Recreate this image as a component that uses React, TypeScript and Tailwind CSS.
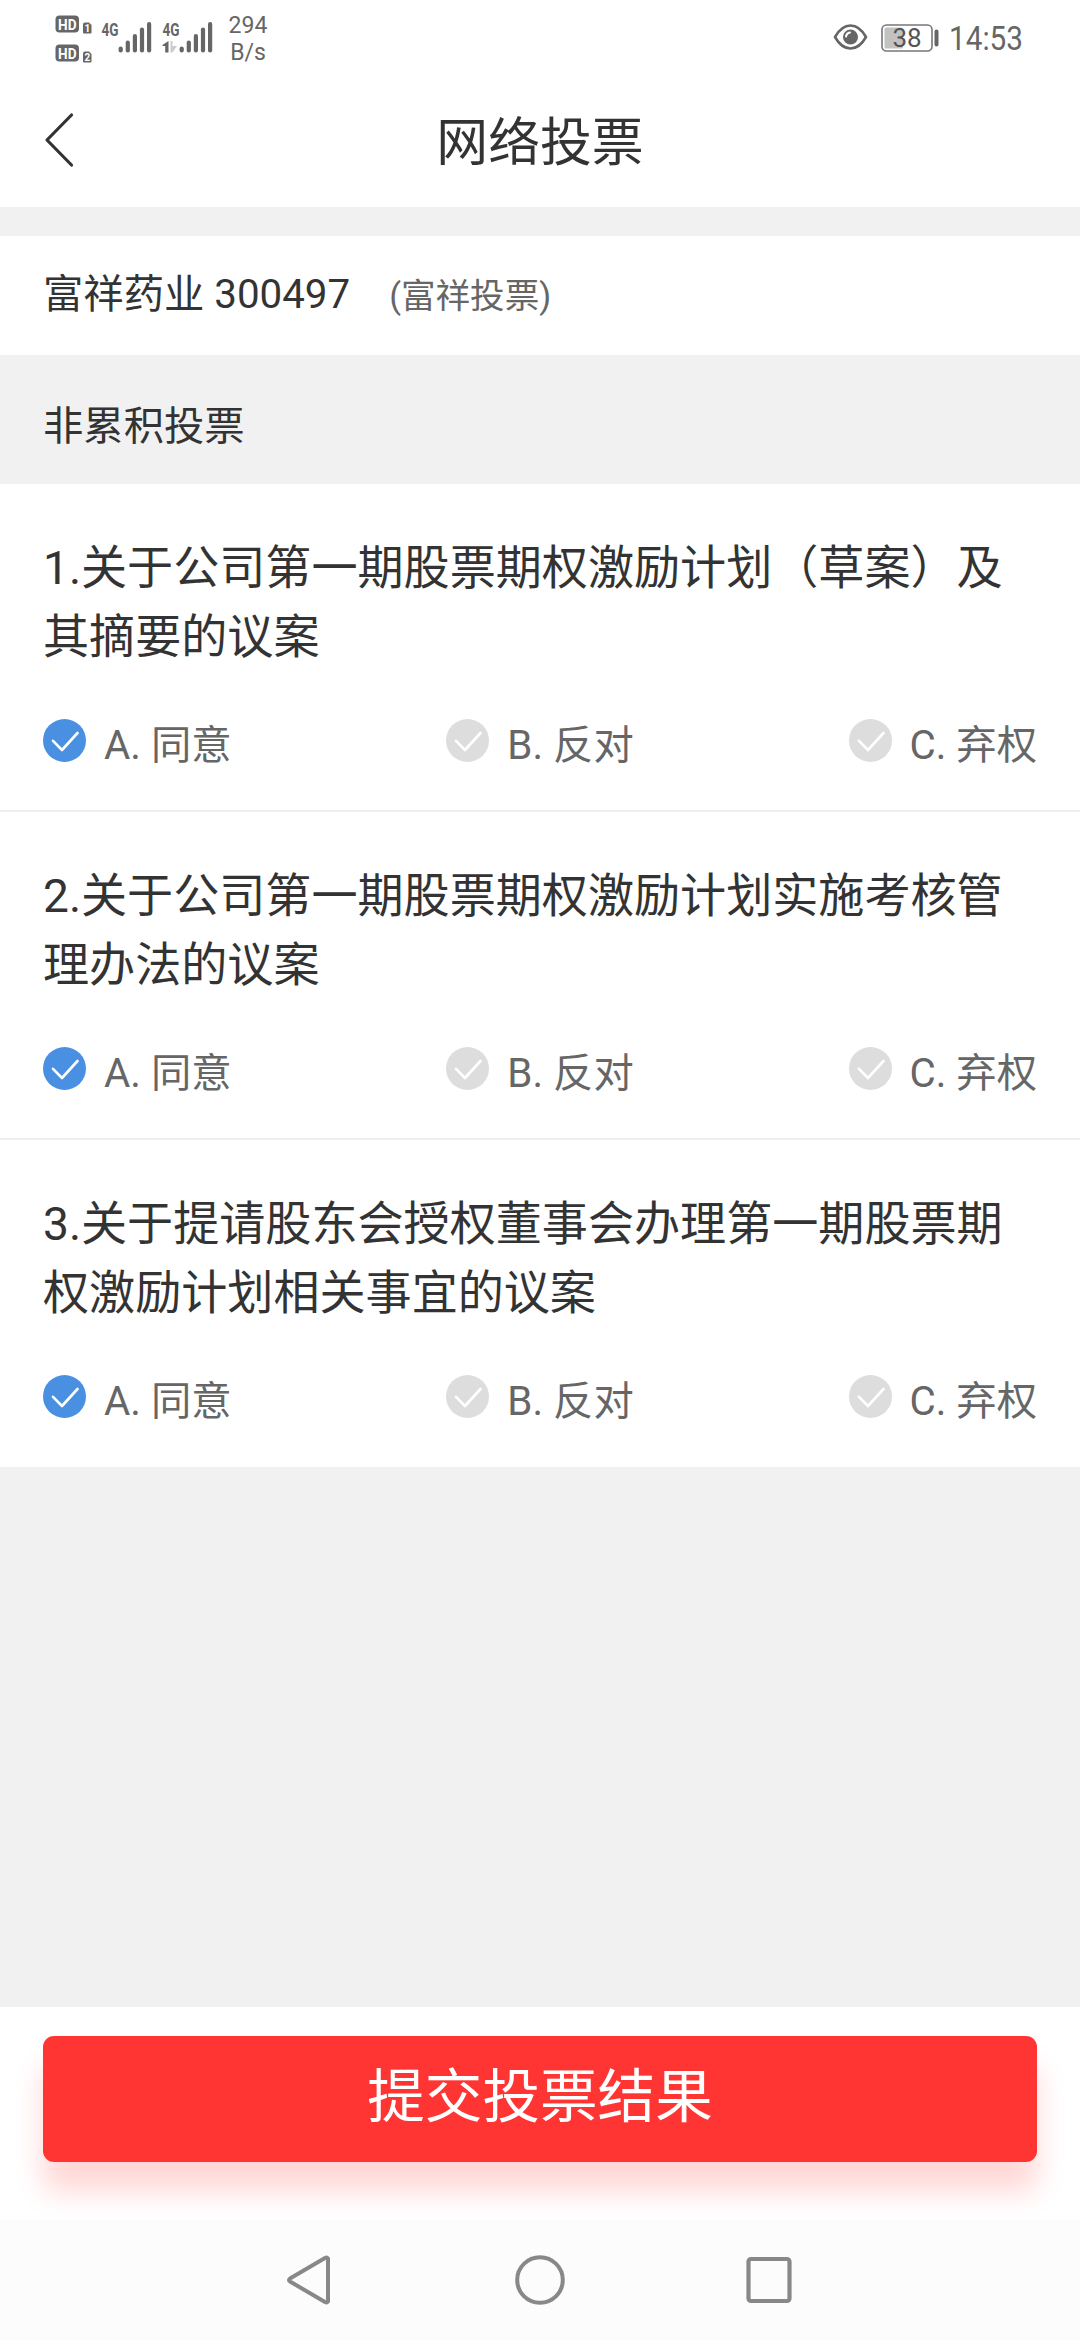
import { useState } from "react"
import clsx from "clsx"

type Option = { key: string; label: string }
type Proposal = { id: number; title: string }

const options: Option[] = [
    { key: "A", label: "同意" },
    { key: "B", label: "反对" },
    { key: "C", label: "弃权" },
]

const proposals: Proposal[] = [
    { id: 1, title: "关于公司第一期股票期权激励计划（草案）及其摘要的议案" },
    { id: 2, title: "关于公司第一期股票期权激励计划实施考核管理办法的议案" },
    { id: 3, title: "关于提请股东会授权董事会办理第一期股票期权激励计划相关事宜的议案" },
]

const HdBadge = ({ sim }: { sim: string }) => (
    <svg width="38" height="19" viewBox="0 0 38 19" className="block overflow-visible">
        <rect x="0.5" y="0.5" width="23.5" height="17" rx="4" fill="#666" />
        <text x="3" y="14.5" fontSize="15" fontWeight="700" fill="#fff" textLength="18.5" lengthAdjust="spacingAndGlyphs">HD</text>
        <path d="M28 9.5q0-2 2-2h4l2.5 2.5v7.500q0 1-1 1H29q-1 0-1-1z" fill="#666" />
        <text x="29.6" y="17" fontSize="10" fontWeight="700" fill="#fff">{sim}</text>
    </svg>
)

const Signal = ({ data }: { data?: boolean }) => (
    <svg width="52" height="36" viewBox="0 0 52 36" className="block overflow-visible">
        <text x="0.5" y="14.800" fontSize="19" fontWeight="700" fill="#666" textLength="17" lengthAdjust="spacingAndGlyphs">4G</text>
        {data && (
            <>
                <path d="M6.500 20v11.500h-3.300V25H0.500v-1z" fill="#666" />
                <path d="M8.500 20h2v5h4.500L10.500 31.500h-2z" fill="#ccc" />
            </>
        )}
        {[25.500, 19.500, 13, 6.500, 1].map((top, i) => (
            <rect key={top} x={17.600 + i * 7.100} y={top} width="4.200" height={31.500 - top} rx="2.1" fill="#666" />
        ))}
    </svg>
)

const StatusBar = () => (
    <div className="h-[75px] flex items-start justify-between pl-[55px] pr-[57px] text-[#666]">
        <div className="flex">
            <div className="flex flex-col gap-[10px] pt-[15px]">
                <HdBadge sim="1" />
                <HdBadge sim="2" />
            </div>
            <div className="flex gap-[9px] pt-[20.5px] pl-[8px]">
                <Signal />
                <Signal data />
            </div>
            <div className="w-[40px] ml-[14px] pt-[12px] text-center text-[23px] leading-[27px]">
                <p>294</p>
                <p>B/s</p>
            </div>
        </div>
        <div className="flex">
            <svg width="35" height="28" viewBox="0 0 35 28" className="mt-[23px]">
                <path d="M2 14Q8.500 2.500 17.500 2.500T33 14Q26.500 25.500 17.500 25.500T2 14z" fill="none" stroke="#666" strokeWidth="2.6" strokeLinejoin="round" />
                <circle cx="17.500" cy="14" r="7.500" fill="#666" />
                <path d="M13 13.500q0.500-3.500 4-4" fill="none" stroke="#fff" strokeWidth="2" strokeLinecap="round" />
            </svg>
            <svg width="59" height="28" viewBox="0 0 59 28" className="mt-[23.5px] ml-[13px] overflow-visible">
                <rect x="1" y="1" width="50" height="26" rx="4.500" fill="none" stroke="#777" strokeWidth="1.600" />
                <rect x="3.500" y="3.500" width="18.500" height="21" rx="1.500" fill="#c2c2c2" />
                <text x="11.500" y="22.500" fontSize="26" fill="#555">38</text>
                <rect x="53.500" y="5.500" width="4" height="17" rx="2" fill="#666" />
            </svg>
            <svg width="74" height="44" viewBox="0 0 74 44" className="mt-[15px] ml-[9px] overflow-visible">
                <text x="0" y="35" fontSize="34" fill="#666" textLength="74" lengthAdjust="spacingAndGlyphs">14:53</text>
            </svg>
        </div>
    </div>
)

const CheckMark = ({ checked }: { checked: boolean }) => (
    <svg width="43" height="43" viewBox="0 0 43 43" className={clsx("block shrink-0", checked ? "text-[#4a90e2]" : "text-[#ddd]")}>
        <circle cx="21.500" cy="21.500" r="21.500" fill="currentColor" />
        <path d="M10 21.800l9 9.200 15.500-17" fill="none" stroke="#fff" strokeWidth="2.600" strokeLinecap="round" strokeLinejoin="round" />
    </svg>
)

const App = () => {
    const [votes, setVotes] = useState<Record<number, string>>({ 1: "A", 2: "A", 3: "A" })

    return (
        <div className="w-[1080px] h-[2340px] flex flex-col overflow-hidden bg-[#f1f1f1] text-[#333] font-[Roboto,'Noto_Sans_CJK_SC',sans-serif]">
            <div className="bg-white">
                <StatusBar />
                {/* Title bar */}
                <header className="h-[132px] grid grid-cols-[1fr_auto_1fr] items-center px-[43px]">
                    <button type="button" aria-label="返回">
                        <svg width="32" height="56" viewBox="0 0 32 56" className="block -mt-[3px]">
                            <path d="M28.500 3L4 28l24.500 25" fill="none" stroke="#333" strokeWidth="3.200" strokeLinecap="round" strokeLinejoin="round" />
                        </svg>
                    </button>
                    <h1 className="pt-[6px] text-[51.84px] leading-[76px]">网络投票</h1>
                </header>
            </div>

            {/* Stock */}
            <div className="mt-[29px] h-[119px] bg-white flex items-baseline px-[43px] pt-[29px]">
                <span className="text-[40.32px] leading-[60px]">富祥药业 300497</span>
                <span className="ml-[39px] text-[34.56px] leading-[60px] text-[#666]">(富祥投票)</span>
            </div>

            <h2 className="h-[129px] px-[43px] pt-[42px] text-[40.32px] leading-[60px]">非累积投票</h2>

            <main className="flex-1">
                {proposals.map((proposal, index) => (
                    <section
                        key={proposal.id}
                        className={clsx(
                            "bg-white px-[43px] pt-[50px]",
                            index < proposals.length - 1 ? "h-[328px] border-b-2 border-[#eee]" : "h-[327px]"
                        )}
                    >
                        <p className="text-[46.08px] leading-[69px]">{`${proposal.id}.${proposal.title}`}</p>
                        <div className="mt-[44px] flex justify-between">
                            {options.map(option => (
                                <button
                                    type="button"
                                    key={option.key}
                                    className="flex items-start text-[40.32px] leading-[60px] text-[#666]"
                                    onClick={() => setVotes({ ...votes, [proposal.id]: option.key })}
                                >
                                    <span className="mt-[3px] mr-[18px]">
                                        <CheckMark checked={votes[proposal.id] === option.key} />
                                    </span>
                                    {`${option.key}. ${option.label}`}
                                </button>
                            ))}
                        </div>
                    </section>
                ))}
            </main>

            <div className="h-[213px] bg-white px-[43px] pt-[29px]">
                <button
                    type="button"
                    className="w-full h-[126px] pb-[2px] rounded-[11px] bg-[#ff3534] text-white text-[57.6px] leading-[86px] shadow-[0_29px_29px_rgba(255,53,52,0.2)]"
                >
                    提交投票结果
                </button>
            </div>

            {/* System navigation */}
            <nav className="h-[120px] shrink-0 bg-[#fcfcfc] relative flex items-center justify-center gap-[180px]">
                <svg width="50" height="50" viewBox="0 0 50 50" fill="none" stroke="#888" strokeWidth="4" strokeLinejoin="round">
                    <path d="M43 3.500v43q-1 1.500-3 0.500L5 26.500q-2-1.500 0-3L40 3q2-1 3 0.500z" />
                </svg>
                <svg width="50" height="50" viewBox="0 0 50 50" fill="none" stroke="#888" strokeWidth="4">
                    <circle cx="25" cy="25" r="22.800" />
                </svg>
                <svg width="50" height="50" viewBox="0 0 50 50" fill="none" stroke="#888" strokeWidth="4.200">
                    <rect x="3.500" y="4" width="41" height="42" rx="2.500" />
                </svg>
            </nav>
        </div>
    )
}

export default App
